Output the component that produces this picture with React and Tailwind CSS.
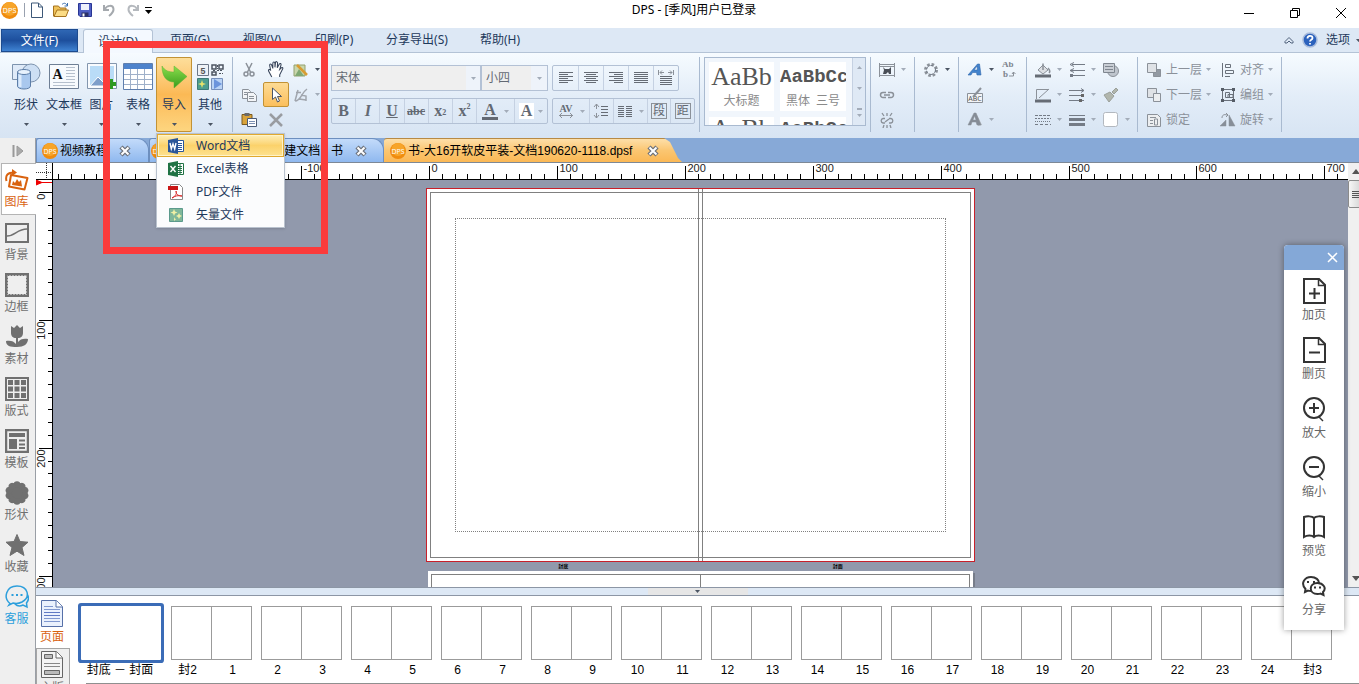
import clsx from 'clsx'

const SCALE = 1.279

const SIDEBAR = ['图库', '背景', '边框', '素材', '版式', '模板', '形状', '收藏', '客服']

const THUMBS = [
  ['封2', '1'], ['2', '3'], ['4', '5'], ['6', '7'], ['8', '9'], ['10', '11'], ['12', '13'],
  ['14', '15'], ['16', '17'], ['18', '19'], ['20', '21'], ['22', '23'], ['24', '封3'],
]

function range(from, to) {
  return Array.from({ length: to - from + 1 }, (_, i) => from + i)
}

function Svg({ s = 16, box = 16, className, children }) {
  return (
    <svg width={s} height={s} viewBox={`0 0 ${box} ${box}`} fill="none" stroke="#8b9199" className={clsx('shrink-0', className)} aria-hidden="true">
      {children}
    </svg>
  )
}

function Arrow({ dark, className }) {
  return (
    <svg width="5" height="3" viewBox="0 0 5 3" className={clsx('shrink-0', className)} aria-hidden="true">
      <path d="M0 0h5L2.5 3z" fill={dark ? '#4b5563' : '#a3acb9'} />
    </svg>
  )
}

function DpsLogo({ s = 16 }) {
  return (
    <svg width={s} height={s} viewBox="0 0 16 16" className="shrink-0" aria-hidden="true">
      <circle cx="8" cy="8" r="8" fill="#f08c0e" />
      <circle cx="8" cy="6.500" r="6.500" fill="#f7a52a" />
      <text x="8" y="10.500" textAnchor="middle" fontSize="7" fill="#fff" fontFamily="Open Sans, sans-serif">DPS</text>
    </svg>
  )
}

/* ---------- title bar ---------- */

function QuickIcons() {
  return (
    <>
      <button aria-label="新建">
        <Svg><path d="M2.500 1h7l4 4v10.500h-11z" fill="#fff" stroke="#3d5878" /><path d="M9.500 1v4h4" stroke="#3d5878" /></Svg>
      </button>
      <button aria-label="打开">
        <Svg>
          <path d="M.5 14V4h5l1.500 2h6v8z" fill="#f0c258" stroke="#a5731f" />
          <path d="M1 14.500 4 8h11.500L13 14.500z" fill="#fbdc85" stroke="#a5731f" />
          <path d="M9 2.500c2-2 4-1.500 5 1M14.500 1v3h-3" stroke="#3b6fae" />
        </Svg>
      </button>
      <button aria-label="保存">
        <Svg>
          <path d="M1.500 1.500h13v13H3L1.500 13z" fill="#4f5fc4" stroke="#283593" />
          <path d="M4 2h8v6H4z" fill="#eef1fb" stroke="none" />
          <path d="M4.500 10.500h7v4h-7z" fill="#2b3166" stroke="none" />
          <path d="M5.500 11.500h2v3h-2z" fill="#fff" stroke="none" />
        </Svg>
      </button>
      <button aria-label="撤销">
        <Svg><path d="M3 3v5h5M3.500 7.500C6 3 12 2.500 12.500 7c.3 3-2 5-4.500 7" stroke="#a5a9ae" strokeWidth="2" /></Svg>
      </button>
      <button aria-label="重做">
        <Svg><path d="M13 3v5H8M12.500 7.500C10 3 4 2.500 3.500 7c-.3 3 2 5 4.500 7" stroke="#b5b9be" strokeWidth="2" /></Svg>
      </button>
    </>
  )
}

function TitleBar() {
  return (
    <header className="flex h-7 shrink-0 bg-white">
      <div className="flex h-5 flex-1 items-center pl-px">
        <DpsLogo s={17} />
        <span className="ml-1.5 h-3.5 w-px bg-gray-400" />
        <div className="ml-1 flex items-center gap-2 [&>button]:h-4"><QuickIcons /></div>
        <button className="ml-1 flex flex-col items-center gap-0.5" aria-label="自定义快速访问">
          <span className="h-px w-[7px] bg-black" />
          <svg width="7" height="4" viewBox="0 0 7 4"><path d="M0 0h7L3.500 4z" fill="#000" /></svg>
        </button>
      </div>
      <h1 className="ml-10 h-5 leading-5 text-black">DPS - [季风]用户已登录</h1>
      <div className="flex h-[26px] flex-1 items-center justify-end pr-3 gap-[34px]">
        <button aria-label="最小化"><Svg s={12} box={12}><path d="M1 6.500h10" stroke="#000" /></Svg></button>
        <button aria-label="还原"><Svg s={12} box={12}><path d="M1.500 3.500h7v7h-7zM3.500 3.500v-2h7v7h-2" stroke="#000" /></Svg></button>
        <button aria-label="关闭"><Svg s={12} box={12}><path d="m1 1 10 10M11 1 1 11" stroke="#000" /></Svg></button>
      </div>
    </header>
  )
}

function MenuTabs() {
  return (
    <nav className="flex h-[25px] shrink-0 items-end border-b border-[#b4c3d6] bg-[#dde8f5] text-[#1e395b]">
      <button className="ml-px h-[23px] w-[77px] border border-[#1d4b8f] bg-linear-to-b from-[#2f67b4] via-[#1d4f9d] to-[#3f83d3] text-white">文件(F)</button>
      <button className="mr-px -mb-px ml-[5px] h-6 w-[70px] rounded-t-[3px] border border-b-0 border-[#b4c3d6] bg-[#f4f9ff]">设计(D)</button>
      {['页面(G)', '视图(V)', '印刷(P)', '分享导出(S)', '帮助(H)'].map(t => (
        <button key={t} className={clsx('h-6 shrink-0', t.length > 5 ? 'w-[94px]' : 'w-[72px]')}>{t}</button>
      ))}
      <div className="mr-0.5 ml-auto flex h-full items-center gap-2">
        <button aria-label="收起功能区"><Svg s={10} box={10}><path d="M1 6.500 5 2.500l4 4v1.500H7L5 6 3 8H1z" stroke="#51627c" /></Svg></button>
        <button aria-label="帮助">
          <Svg>
            <circle cx="8" cy="8" r="7" fill="#2c62bd" stroke="#a9bcdc" strokeWidth="1.500" />
            <path d="M5.500 6.500c0-3.500 5-3.500 5-.5 0 2-2.500 1.500-2.500 3.500M8 11v1.500" stroke="#fff" strokeWidth="1.800" />
          </Svg>
        </button>
        <button className="flex items-center gap-1.5">选项 <Arrow dark className="-mr-1" /></button>
      </div>
    </nav>
  )
}

/* ---------- ribbon ---------- */

function BigIcon({ name }) {
  if (name === '形状') return (
    <Svg s={30} box={30}>
      <path d="M1.500 3.500h15v15h-15z" fill="#dfeaf8" stroke="#7d93ae" />
      <circle cx="20" cy="12" r="9" fill="#cddff4" stroke="#7d93ae" />
      <path d="M6.500 11v14c0 4 13 4 13 0V11z" fill="#a9c8ee" stroke="#5d7ea8" />
      <path d="M9 13v13" stroke="#dcebfb" strokeWidth="3" />
      <ellipse cx="13" cy="11" rx="6.500" ry="2.500" fill="#e8f2fd" stroke="#5d7ea8" />
    </Svg>
  )
  if (name === '文本框') return (
    <Svg s={30} box={30}>
      <path d="M.5 3.500h29v24H.5z" fill="#f7fafd" stroke="#6e7f95" />
      <text x="8.500" y="18" textAnchor="middle" fontSize="14" fontWeight="bold" fill="#111" stroke="none" fontFamily="Liberation Serif, serif">A</text>
      <path d="M17 6.500h9M17 9.500h9M17 12.500h9M17 15.500h9M17 18.500h9M4 21.500h22M4 24.500h22" stroke="#b6c0cd" />
    </Svg>
  )
  if (name === '图片') return (
    <Svg s={30} box={30}>
      <path d="M.5 2.500h29v25H.5z" fill="#f8fbfe" stroke="#8396ae" />
      <path d="M3 5h24v20H3z" fill="#b9dcf7" stroke="none" />
      <path d="m3 25 8-9 6 6 3-3 7 6z" fill="#7f9fca" stroke="#fff" />
      <path d="M24 18v10M19 23h10" stroke="#2f9a23" strokeWidth="4" />
    </Svg>
  )
  if (name === '表格') return (
    <Svg s={30} box={30}>
      <path d="M.5 2.500h29v26H.5z" fill="#fff" stroke="#5f7fae" />
      <path d="M1 3h28v5H1z" fill="#4d83cc" stroke="none" />
      <path d="M7.500 8v20M14.500 8v20M21.500 8v20M1 13.500h28M1 18.500h28M1 23.500h28" stroke="#9fb0c9" />
    </Svg>
  )
  if (name === '导入') return (
    <Svg s={30} box={30}>
      <defs>
        <linearGradient id="import-green" x1="0" y1="0" x2="0" y2="1">
          <stop offset="0" stopColor="#8ade4c" />
          <stop offset="1" stopColor="#3a9c1c" />
        </linearGradient>
      </defs>
      <path d="M3 5c3 5 7 6 12 6V5l13 10.500L15 27v-6C8 21 3 16 3 5z" fill="url(#import-green)" stroke="#5cb035" strokeWidth=".5" />
    </Svg>
  )
  return (
    <Svg s={30} box={30}>
      <path d="M2.500 3.500h11v11h-11z" fill="#eef2f7" stroke="#6c7788" />
      <text x="8" y="12.500" textAnchor="middle" fontSize="9" fontWeight="bold" fill="#555" stroke="none" fontFamily="Liberation Mono, monospace">5</text>
      <path d="M17 4h4v4h-4zM24 4h4v4h-4zM17 11h4v3h-4z" stroke="#4d5561" strokeWidth="1.500" />
      <path d="M22.500 4v4M22 9.500h6M24 12.500h4M18 9.500h2" stroke="#4d5561" strokeDasharray="2 1" />
      <path d="M2.500 17.500h11v11h-11z" fill="#4c9e8e" stroke="#3e7a78" />
      <path d="m7 19 1 3 3 1-3 1-1 3-1-3-3-1 3-1z" fill="#e6e36b" stroke="none" />
      <path d="M16.500 17.500h11v11h-11z" fill="#b9d3f5" stroke="#7790bb" />
      <path d="m19 18 8 5-8 5z" fill="#6b94dc" stroke="none" />
    </Svg>
  )
}

const BIG = [
  ['形状', 'w-[38px]'], ['文本框', 'w-[38px]'], ['图片', 'w-[37px]'],
  ['表格', 'w-9'], ['导入', 'w-9'], ['其他', 'w-9'],
]

function BigButtons() {
  return (
    <div className="flex pl-[7px] pr-1">
      {BIG.map(([name, width]) => (
        <button
          key={name}
          className={clsx(
            'flex h-[75px] flex-col items-center pt-1 text-[#1e395b]',
            width,
            name === '导入' && 'rounded-[2px] bg-linear-to-b from-[#fddf9c] via-[#fbb955] to-[#fdd680] ring-1 ring-[#c29235] ring-inset',
          )}
        >
          <BigIcon name={name} />
          <span className="mt-1 leading-5 whitespace-nowrap">{name}</span>
          <Arrow dark className="mt-2" />
        </button>
      ))}
    </div>
  )
}

function Group({ className, children }) {
  return <div className={clsx('h-[75px] shrink-0 border-l border-[#a9bad0]', className)}>{children}</div>
}

// Small button with an optional drop-down arrow
function Tool({ label, arrow, dark, className, children }) {
  return (
    <button aria-label={label} className={clsx('flex h-[25px] items-center gap-1.5', className)}>
      {children}
      {arrow && <Arrow dark={dark} />}
    </button>
  )
}

function EditGroup() {
  return (
    <Group className="grid w-[94px] grid-cols-[28px_26px_1fr] pl-[2px]">
      <Tool label="剪切" className="justify-center"><Svg><path d="M5 1l4.500 9M11 1 6.500 10" strokeWidth="1.500" /><circle cx="5" cy="12" r="2" strokeWidth="1.500" /><circle cx="11" cy="12" r="2" strokeWidth="1.500" /></Svg></Tool>
      <Tool label="抓手" className="justify-center">
        <Svg s={18} box={17}><path d="M4.500 15 1.500 9.500C1 8 2.500 7.500 3.500 9L2.500 4c0-1.500 1.500-1.500 2 0L5.500 7V2.500c0-2 2-2 2 0V6l.5-4.500c.3-1.500 2-1 2 .5L9.700 6.500 11.500 3c.8-1.300 2-.5 1.700.8L12 8l1.500-1.500c1-1 2 0 1 1.500L12 13v2" fill="#fff" stroke="#37445a" /></Svg>
      </Tool>
      <Tool label="图像编辑" arrow dark className="pl-1">
        <Svg><path d="M1 3h11v11H1z" fill="#c9d7ac" stroke="#94a06e" /><path d="m2 14 4-7 5 7z" fill="#7fa873" stroke="none" /><path d="m4 3 10 10" stroke="#d99c32" strokeWidth="2.500" /></Svg>
      </Tool>
      <Tool label="复制" className="justify-center"><Svg><path d="M1.500 2.500h6l2 2v7h-8z" fill="#f3f5f8" /><path d="M6.500 5.500h6l3 3v6h-9z" fill="#f3f5f8" /><path d="M3 5.500h3M3 7.500h3M8 9.500h5M8 11.500h5" /></Svg></Tool>
      <Tool label="选择" className="justify-center rounded-[2px] border border-[#c29235] bg-linear-to-b from-[#fddb93] to-[#fbbf5c]">
        <Svg><path d="M4.500 1v11.500l3-2.500 2 5 2-1-2-4.500h4z" fill="#fff" stroke="#4a5568" /></Svg>
      </Tool>
      <Tool label="路径" arrow className="pl-1"><Svg><path d="M3 5.500h5M2 14 5 3M2 14c6 0 6-8 12-12M8 8l5 1v5M6 12l7 1" stroke="#a0a5ad" strokeWidth="1.500" /></Svg></Tool>
      <Tool label="粘贴" className="justify-center">
        <Svg><path d="M1 2.500h10v10H1z" fill="#d9a33a" stroke="#7a5a20" /><path d="M3.500 1h5v3h-5z" fill="#6a6a6a" stroke="none" /><path d="M6.500 6.500h9v8h-9z" fill="#fff" stroke="#4a5a75" /><path d="M8 9.500h6M8 11.500h6" stroke="#7b8fb2" /></Svg>
      </Tool>
      <Tool label="删除" className="justify-center"><Svg><path d="m2 2 12 12M14 2 2 14" stroke="#999ca1" strokeWidth="2.500" /></Svg></Tool>
    </Group>
  )
}

function Lines({ rows }) {
  return (
    <Svg>
      {rows.map(([x, w], i) => <path key={i} d={`M${x} ${2.5 + i * 2}h${w}`} stroke="#666c75" />)}
    </Svg>
  )
}

const BOX = 'flex h-[26px] items-stretch rounded-[2px] border border-[#b3c1d5] [&>button]:flex [&>button]:items-center [&>button]:justify-center [&>button]:border-l [&>button]:border-[#c5d1e2] [&>button:first-child]:border-l-0'

function FontGroup() {
  return (
    <div className="flex w-[373px] shrink-0 flex-col gap-[7px] pt-2 pl-[5px] text-[#636973]">
      <div className="flex gap-1">
        <div className="flex h-[26px] w-[217px] border border-[#b3c1d5] bg-[#eef3fa]">
          <select disabled aria-label="字体" defaultValue="宋体" className="w-[134px] appearance-none bg-[#efefef] pl-1 opacity-100">
            <option>宋体</option>
          </select>
          <span className="flex w-[14px] items-center justify-center"><Arrow /></span>
          <select disabled aria-label="字号" defaultValue="小四" className="flex-1 appearance-none border-l-2 border-[#b3c1d5] bg-[#efefef] pl-1 opacity-100">
            <option>小四</option>
          </select>
          <span className="flex w-[16px] items-center justify-center"><Arrow /></span>
        </div>
        <div className={clsx(BOX, '[&>button]:w-[25px]')}>
          <button aria-label="左对齐"><Lines rows={[[1, 14], [1, 9], [1, 14], [1, 9], [1, 14], [1, 9]]} /></button>
          <button aria-label="居中"><Lines rows={[[1, 14], [3, 10], [1, 14], [3, 10], [1, 14], [3, 10]]} /></button>
          <button aria-label="右对齐"><Lines rows={[[1, 14], [6, 9], [1, 14], [6, 9], [1, 14], [6, 9]]} /></button>
          <button aria-label="两端对齐"><Lines rows={[[1, 14], [1, 14], [1, 14], [1, 14], [1, 14], [1, 14]]} /></button>
          <button aria-label="分散对齐">
            <Svg><path d="M.5 0v5M15.500 0v5M2 2.500h4M10 2.500h4M4 .5 2 2.500l2 2M12 .5l2 2-2 2" /><path d="M2 6.500h12M2 8.500h12M2 10.500h12M2 12.500h12M2 14.500h12" stroke="#666c75" /></Svg>
          </button>
        </div>
      </div>
      <div className="flex gap-1 font-['Liberation_Serif','Noto_Sans_CJK_SC',serif]">
        <div className={clsx(BOX, 'w-[217px] [&>button]:flex-1 text-base font-bold')}>
          <button>B</button>
          <button className="italic">I</button>
          <button className="underline">U</button>
          <button className="text-xs line-through">abc</button>
          <button className="text-base leading-4">x<sub className="text-[8px]">2</sub></button>
          <button className="text-base leading-4">x<sup className="text-[8px]">2</sup></button>
          <button className="min-w-[38px] gap-1.5" aria-label="字体颜色"><span className="border-b-3 px-0.5 leading-[14px]">A</span><Arrow /></button>
          <button className="min-w-[33px] gap-1" aria-label="背景颜色"><span className="bg-white px-0.5 leading-4">A</span><Arrow /></button>
        </div>
        <div className={clsx(BOX, 'w-[143px] [&>button]:flex-1')}>
          <button className="min-w-9 gap-1.5" aria-label="字间距">
            <Svg><text x="8" y="8.500" textAnchor="middle" fontSize="10" fontWeight="bold" fill="#666c75" stroke="none">AV</text><path d="M1 12.500h14M4 10l-2.500 2.500L4 15M12 10l2.500 2.500L12 15" /></Svg>
            <Arrow />
          </button>
          <button aria-label="行距"><Svg><path d="M3.500 1v5M1 4l2.500-3L6 4M3.500 10v5M1 12l2.500 3L6 12" /><path d="M8 3.500h7M8 6.500h7M8 9.500h7M8 12.500h7" stroke="#666c75" /></Svg></button>
          <button className="min-w-[34px] gap-1.5" aria-label="分栏"><Svg><path d="M1 3.500h6M9 3.500h6M1 5.500h6M9 5.500h6M1 7.500h6M9 7.500h6M1 9.500h6M9 9.500h6M1 11.500h6M9 11.500h6M1 13.500h6M9 13.500h6" stroke="#666c75" /></Svg><Arrow /></button>
          <button><span className="border border-[#8b9199] px-px leading-[14px]">段</span></button>
          <button><span className="border border-[#8b9199] px-px leading-[14px]">距</span></button>
        </div>
      </div>
    </div>
  )
}

const SERIF = "font-['Liberation_Serif',serif] text-[26px] text-[#555]"
const MONO = "font-['Liberation_Mono',monospace] text-[19px] font-bold text-[#555]"

function StyleGallery() {
  return (
    <Group className="w-[171px] pl-1">
      <div className="flex h-[69px] w-[162px] overflow-hidden border border-[#a9bad0] bg-[#f1f6fc]">
        <div className="grid flex-1 grid-cols-[65px_66px] content-start gap-x-1.5 gap-y-1.5 overflow-hidden pt-1 pl-1 text-center whitespace-nowrap text-[#8a8a8a]">
          <button className="h-[49px] bg-white">
            <span className={clsx(SERIF, 'block leading-7')}>AaBb</span>
            <span className="block leading-5">大标题</span>
          </button>
          <button className="h-[49px] overflow-hidden bg-white">
            <span className={clsx(MONO, 'block text-left leading-7')}>AaBbCc</span>
            <span className="block leading-5">黑体&nbsp; 三号</span>
          </button>
          <button className={clsx(SERIF, 'flex h-8 justify-center bg-white leading-6')}>AaBb</button>
          <button className={clsx(MONO, 'flex h-8 overflow-hidden bg-white leading-6')}>AaBbCc</button>
        </div>
        <div className="flex w-[13px] flex-col items-center justify-between border-l border-[#c5d1e2] bg-[#dfe9f5] py-2">
          <Arrow className="rotate-180" />
          <Arrow />
          <span className="border-t-2 border-[#a3acb9] pt-1"><Arrow /></span>
        </div>
      </div>
    </Group>
  )
}

function ShapeGroups() {
  return (
    <>
      <Group className="w-11 pl-2">
        <Tool label="文字环绕" arrow><Svg><path d="M.5 2.500h15M.5 4.500h15M.5 13.500h15M.5 1v14M15.500 1v14" /><path d="m4 5 2 2h4l2-2v7h-2l-1-2-2 2H4l1-4z" fill="#4a4f57" stroke="none" /></Svg></Tool>
        <Tool label="链接"><Svg><path d="M7 5.500H4a2.500 2.500 0 0 0 0 5h3M9 5.500h3a2.500 2.500 0 0 1 0 5H9M5 8h6" strokeWidth="1.500" /></Svg></Tool>
        <Tool label="取消链接"><Svg><path d="M6 6.500H4a2.300 2.300 0 0 0 0 4.500h2M10 6.500h2a2.300 2.300 0 0 1 0 4.500h-2M6 10l4-3M8 1v3M3 1l2 3M13 1l-2 3M8 13v3M4 16l1-3M12 16l-1-3" strokeWidth="1.300" /></Svg></Tool>
      </Group>
      <Group className="w-11 pl-2">
        <Tool label="效果" arrow dark><Svg><circle cx="8" cy="8" r="5.500" strokeWidth="3" strokeDasharray="2.500 1.800" /><circle cx="8" cy="8" r="4.500" stroke="#707885" strokeDasharray="3 2" /></Svg></Tool>
      </Group>
      <Group className="grid w-[68px] grid-cols-[34px_1fr] pl-2">
        <Tool label="艺术字" arrow dark><Svg><path d="M1 13h3l1.500-2.500h4L10 13h4L12.500 2h-2zM7 8l3-4 .5 4z" fill="#4283cd" stroke="#3168ad" strokeWidth=".6" /></Svg></Tool>
        <Tool label="替换"><Svg><g fill="#7c838d" stroke="none" fontSize="9" fontWeight="bold" fontFamily="Liberation Serif, serif"><text x="1" y="5">Ab</text><text x="2" y="15">b</text></g><path d="M8 14h4.500v-4M11 12l1.500-2 2 2" /></Svg></Tool>
        <Tool label="文字编辑"><Svg><path d="M.5 6.500h15v9H.5z" fill="#f2f4f7" /><text x="8" y="14" textAnchor="middle" fontSize="7" fill="#555" stroke="none">ABC</text><path d="m6 10 8-9" strokeWidth="2" /></Svg></Tool>
        <span />
        <Tool label="文字阴影" arrow><Svg><path d="m9 1 6 12-4 1z" fill="#b4b9c0" stroke="none" /><path d="M1 13h3l1-3h4l1 3h4L9 1H7zM6 8l1.500-4L9 8z" fill="#858c96" strokeWidth=".5" /></Svg></Tool>
      </Group>
      <Group className="grid w-[111px] grid-cols-[34px_34px_1fr] pl-2">
        <Tool label="填充" arrow><Svg><path d="m3 8 5-5 5 5-5 4z" fill="#dcdfe3" /><path d="M8 8V1.500M13 6c2 2 2 4 1 5" strokeWidth="1.500" /><path d="M0 14h16" stroke="#666c75" strokeWidth="3" /></Svg></Tool>
        <Tool label="箭头起点" arrow><Svg><path d="M3 2.500h13M1 8.500h15M3 13.500h13M5 .5l-4 2 4 2M5 6.500l-4 2 4 2" stroke="#747b86" /><path d="M1 12h3v3H1z" fill="#747b86" stroke="none" /></Svg></Tool>
        <Tool label="阴影"><Svg><circle cx="10" cy="9" r="5.500" fill="#bfc5cd" /><path d="M.5 1.500h11v9H.5z" fill="#c8cdd4" stroke="#7f868f" /><path d="M2 4.500h8M2 7.500h8" stroke="#7f868f" /></Svg></Tool>
        <Tool label="轮廓" arrow><Svg><path d="M1.500 12V2.500H13M4 11l10-9" /><path d="M0 14h16" stroke="#666c75" strokeWidth="3" /></Svg></Tool>
        <Tool label="箭头终点" arrow><Svg><path d="M0 3.500h15M0 8.500h15M0 13.500h15M12 1.500l3 2-3 2" stroke="#747b86" /><path d="M12 7h3v3h-3zM10 12h3v3h-3z" fill="#666" stroke="none" /></Svg></Tool>
        <Tool label="格式刷"><Svg><path d="m9 5 4-4 2 2-4 4zM1 8l6-3 4 4-5 6z" fill="#b1b6ad" stroke="#9ba09a" /></Svg></Tool>
        <Tool label="线型" arrow><Svg><g stroke="#747b86"><path d="M0 3.500h16" strokeDasharray="3 1" /><path d="M0 6.500h16" strokeDasharray="2 1" /><path d="M0 9.500h16" strokeDasharray="1 1" /><path d="M0 12.500h16" strokeDasharray="3 2" /></g></Svg></Tool>
        <Tool label="线宽" arrow><Svg><path d="M0 3.500h16" stroke="#747b86" /><path d="M0 7.500h16" stroke="#747b86" strokeWidth="3" /><path d="M0 12.500h16" stroke="#747b86" strokeWidth="3" /></Svg></Tool>
        <Tool label="圆角" arrow><Svg><rect x=".5" y=".5" width="14" height="14" rx="2" fill="#fff" stroke="#b3b8bf" /></Svg></Tool>
      </Group>
    </>
  )
}

function ArrangeGroup() {
  return (
    <Group className="grid w-[145px] grid-cols-[74px_1fr] border-r pl-2 whitespace-nowrap text-[#8b919a] [&_button]:gap-1">
      <Tool arrow><Svg><path d="M7.500 7.500h7v7h-7z" fill="#9299a2" /><path d="M1.500 1.500h9v9h-9z" fill="#dfe2e6" /></Svg>上一层</Tool>
      <Tool arrow><Svg><path d="M2.500 1v14M5.500 2.500h5v3h-5zM5.500 8.500h8v3h-8zM5 14.500h5" stroke="#6a717b" /></Svg>对齐</Tool>
      <Tool arrow><Svg><path d="M1.500 1.500h9v9h-9z" fill="#dfe2e6" /><path d="M7.500 6.500h7v8h-7z" fill="#eceef0" /></Svg>下一层</Tool>
      <Tool arrow><Svg><path d="M2.500 2.500h11v11h-11zM5.500 5.500h4v5h-4zM8 7.500h5v3H8z" stroke="#6a717b" /><path d="M1 1h3v3H1zM12 1h3v3h-3zM1 12h3v3H1zM12 12h3v3h-3z" fill="#555c66" stroke="none" /></Svg>编组</Tool>
      <Tool><Svg><path d="M1.500 2.500h10l3 3v9h-13z" fill="#eceef0" /><path d="M4 5.500h6M4 8.500h3M4 11.500h3M8.500 7v6h3V7z" /></Svg>锁定</Tool>
      <Tool arrow><Svg><path d="m0 14 6-6v6zM9 14V3l6 11z" fill="#878e98" strokeWidth=".5" /><path d="M2 6c0-3 2-4 5-3M6 1l2 2-2 2" /></Svg>旋转</Tool>
    </Group>
  )
}

const IMPORTS = ['Word文档', 'Excel表格', 'PDF文件', '矢量文件']

function ImportIcon({ name }) {
  if (name === 'PDF文件') return (
    <Svg>
      <path d="M2.500.5h9l3 3v12h-12z" fill="#fff" stroke="#8a8a8a" />
      <path d="M0 2h10v4H0z" fill="#c91616" stroke="none" />
      <path d="M4 14c4-2 5-5 4-7 0 4 3 5 6 5-4-1-7 0-10 2z" stroke="#d92b2b" />
    </Svg>
  )
  if (name === '矢量文件') return (
    <Svg>
      <path d="M1.500 1.500h13v13h-13z" fill="#7fb79a" stroke="#5b9a8c" />
      <path d="m6 2 1 2.500 2.500 1L7 6.500 6 9 5 6.500l-2.500-1L5 4.500zM11 6l1 2 2 1-2 1-1 2-1-2-2-1 2-1zM6 10l.8 1.500 1.500.8-1.500.8L6 14.500z" fill="#f0f0a5" stroke="none" />
    </Svg>
  )
  const word = name === 'Word文档'
  const color = word ? '#2a5699' : '#1f7244'
  return (
    <Svg>
      <path d="M8.500 2.500h7v11h-7z" fill="#fff" stroke={color} />
      <path d="M10 5.500h4M10 7.500h4M10 9.500h4M10 11.500h4" stroke={color} />
      {!word && <path d="M12 3v10" stroke={color} />}
      <path d="M0 2 10 0v16L0 14z" fill={color} stroke="none" />
      <path d={word ? 'm2 5 1.300 6L5 6l1.700 5L8 5' : 'm2.500 5 5 6M7.500 5l-5 6'} stroke="#fff" strokeWidth="1.400" />
    </Svg>
  )
}

function ImportMenu() {
  return (
    <ul className="absolute top-[80px] left-[156px] z-20 w-[129px] border border-[#b9c2ce] bg-[#fbfcfd] pb-px text-[#1e395b] shadow-sm">
      {IMPORTS.map((name, i) => (
        <li key={name}>
          <button className={clsx(
            'flex h-[23px] w-full items-center gap-3 border pl-2.5',
            i === 0 ? 'border-[#e0a92f] bg-linear-to-b from-[#fdeeb6] via-[#fbd26b] to-[#fde28f] ring-1 ring-[#fff3c8] ring-inset' : 'border-transparent',
          )}>
            <ImportIcon name={name} />
            <span>{name}</span>
          </button>
        </li>
      ))}
    </ul>
  )
}

function Ribbon() {
  return (
    <div className="relative flex h-[85px] shrink-0 bg-linear-to-b from-[#f6fbff] via-[#e3edf8] to-[#d7e4f3] pt-1">
      <BigButtons />
      <EditGroup />
      <FontGroup />
      <StyleGallery />
      <ShapeGroups />
      <ArrangeGroup />
      <ImportMenu />
    </div>
  )
}

/* ---------- workspace ---------- */

function SideIcon({ name }) {
  const g = '#707070'
  switch (name) {
    case '图库': return <Svg s={24} box={24}><path d="m6 7 16.500 3-3 11.500L4 18.500z" stroke="#d9620f" strokeWidth="2" strokeLinejoin="round" /><path d="m7 17 1-4 2 2 2-4 2 3 2-2 1 6.500z" fill="#d9620f" stroke="none" /><path d="M1.500 13C0 7 3 4.500 9 4.500" stroke="#d9620f" strokeWidth="2" /><path d="m7 1 5 3.500L7 8z" fill="#d9620f" stroke="none" /></Svg>
    case '背景': return <Svg s={24} box={24}><path d="M1 3h22v18H1z" stroke={g} strokeWidth="2" /><path d="M2 15c8 0 10-7 20-7" stroke={g} strokeWidth="1.500" /></Svg>
    case '边框': return <Svg s={24} box={24}><path d="M1 1h22v22H1z" stroke={g} strokeWidth="2" /><path d="M2.500 2.500h19v19h-19z" stroke={g} strokeDasharray="2 1" /></Svg>
    case '素材': return <Svg s={24} box={24}><path d="M6 1l3 2 3-3 3 3 3-2v7c0 3-2 5-5 5v4c2-3 6-4 10-3 0 5-4 8-11 8S1 21 1 16c4-1 8 0 10 3v-6c-3 0-5-2-5-5z" fill={g} stroke="none" /></Svg>
    case '版式': return <Svg s={24} box={24}><path d="M1 1h22v22H1z" fill="#efefef" stroke={g} strokeWidth="2" /><path d="M3 3h5v5H3zM9.500 3h5v5h-5zM16 3h5v5h-5zM3 9.500h5v5H3zM9.500 9.500h5v5h-5zM16 9.500h5v5h-5zM3 16h5v5H3zM9.500 16h5v5h-5zM16 16h5v5h-5z" fill={g} stroke="none" /></Svg>
    case '模板': return <Svg s={24} box={24}><path d="M1 1h22v22H1z" fill="#efefef" stroke={g} strokeWidth="2.500" /><path d="M4 4h16v4H4zM4 10h8v10H4z" fill={g} stroke="none" /><path d="M14 11.500h6M14 15.500h6M14 19h6" stroke={g} strokeWidth="2" /></Svg>
    case '形状': return (
      <Svg s={24} box={24}>
        <g fill={g} stroke="none">
          <circle cx="12" cy="12" r="10.500" />
          {range(0, 9).map(i => <circle key={i} cx="12" cy="3.500" r="3.300" transform={`rotate(${i * 36} 12 12)`} />)}
        </g>
      </Svg>
    )
    case '收藏': return <Svg s={24} box={24}><path d="m12 1.500 3 7 8 .7-6 5.300 2 8-7-4.300L5 22.500l2-8L1 9.200l8-.7z" fill={g} stroke={g} strokeLinejoin="round" /></Svg>
    default: return <Svg s={24} box={24}><path d="M5 18.500C-2 13 1 1 12 1s14 11 5 16c-3 1.500-6 2-9 1l-4 2zM22 9c2 3 2 6-.5 9l.5 4-4-2c-3 1.500-6 1-8-1" stroke="#2d9fdc" strokeWidth="1.500" /><path d="M6.500 10h2M11 10h2M15.500 10h2" stroke="#2d9fdc" strokeWidth="2" /></Svg>
  }
}

function Sidebar() {
  return (
    <aside className="flex w-9 shrink-0 flex-col border-r border-[#9a9fa6] bg-[#efefef]">
      <button className="flex h-[25px] items-center justify-center" aria-label="展开">
        <Svg><path d="M3.500 2v12" stroke="#999" strokeWidth="2" /><path d="m7 3 6 5-6 5z" fill="#aaa" stroke="#999" /></Svg>
      </button>
      {SIDEBAR.map(name => (
        <button
          key={name}
          className={clsx(
            'flex h-[52px] shrink-0 flex-col items-center',
            name === '图库' ? '-mr-px ml-px border border-r-0 border-[#b4b4b4] bg-white pt-1 pr-[5px] text-[#d9620f]' : 'pt-1.5 pr-0.5',
            name === '客服' && 'text-[#2d9fdc]',
            name !== '图库' && name !== '客服' && 'text-[#707070]',
          )}
        >
          <SideIcon name={name} />
          <span className="leading-5">{name}</span>
        </button>
      ))}
    </aside>
  )
}

function CloseX() {
  return (
    <button aria-label="关闭文档" className="flex">
      <Svg s={12} box={12}><path d="m2 2 8 8M10 2l-8 8" stroke="#6b7079" strokeWidth="4.500" /><path d="m2.500 2.500 7 7M9.500 2.500l-7 7" stroke="#fff" strokeWidth="2" /></Svg>
    </button>
  )
}

const TAB_BLUE = 'flex h-6 items-center rounded-tr-[12px] rounded-tl-[3px] border border-b-0 border-[#6d8fbf] bg-linear-to-b from-[#c3dbfa] to-[#8fb8ef]'

function DocTabs() {
  return (
    <div className="flex h-[25px] shrink-0 items-end border-b border-[#7d8896] bg-[#87a9d7] font-['Liberation_Sans','Noto_Sans_CJK_SC',sans-serif] whitespace-nowrap text-black">
      <div className={clsx(TAB_BLUE, 'w-[113px] gap-0.5 pl-[5px]')}><DpsLogo /><span className="flex-1">视频教程</span><span className="pr-[17px]"><CloseX /></span></div>
      <div className={clsx(TAB_BLUE, 'w-[235px] justify-end gap-3 pr-[16px]')}><span className="flex flex-1 pl-px"><DpsLogo /></span><span>新建文档 - 书</span><CloseX /></div>
      <div className="flex h-6 w-[298px] items-center gap-0.5 rounded-tl-[3px] border-t border-[#b78a45] bg-linear-to-b from-[#fddfa8] via-[#fbc671] to-[#fbb855] pl-1.5 [clip-path:polygon(0_0,calc(100%-18px)_0,calc(100%-12px)_4px,calc(100%-4px)_20px,100%_100%,0_100%)]">
        <DpsLogo />
        <span className="flex-1">书-大16开软皮平装-文档190620-1118.dpsf</span>
        <span className="pr-[23px]"><CloseX /></span>
      </div>
    </div>
  )
}

function TopRuler() {
  return (
    <svg className="h-[17px] min-w-0 flex-1 border-b border-black bg-white" aria-hidden="true">
      {range(-29, 90).map(n => {
        const x = Math.round(376 + n * 10 * SCALE) + 0.5
        const major = n % 10 === 0
        return (
          <g key={n}>
            <path d={`M${x} ${major ? 3 : 11}V17`} stroke="#000" />
            {major && <text x={x + 2} y="9" fontSize="11" fill="#222">{n * 10}</text>}
          </g>
        )
      })}
    </svg>
  )
}

function SideRuler() {
  return (
    <svg className="w-[17px] shrink-0 border-r border-black bg-white" aria-hidden="true">
      {range(0, 60).map(n => {
        const y = Math.round(12 + n * 10 * SCALE) + 0.5
        const major = n % 10 === 0
        return (
          <g key={n}>
            <path d={`M${major ? 3 : 12} ${y}H17`} stroke="#000" />
            {major && <text transform={`translate(9 ${y + 1}) rotate(-90)`} textAnchor="end" fontSize="11" fill="#222">{n * 10}</text>}
          </g>
        )
      })}
      <path d="M0 0v5l6-2.500zM6 2.500h11" fill="#e00" stroke="#e00" />
    </svg>
  )
}

function Canvas() {
  return (
    <main className="flex min-w-0 flex-1 flex-col items-center overflow-hidden bg-[#9199ac] pt-2">
      <div className="relative h-[374px] w-[549px] shrink-0 border border-[#c8202a] bg-white p-[3px]">
        <div className="h-full border border-[#808080] px-6 py-[25px]">
          <div className="h-full border border-dotted border-[#808080]" />
        </div>
        <span className="absolute inset-y-0 left-[271px] w-[5px] border-x border-[#808080]" />
      </div>
      <div className="flex w-[549px] shrink-0 justify-around text-[5px] leading-[9px] font-bold text-black"><span>封底</span><span>封面</span></div>
      <div className="h-[374px] w-[545px] shrink-0 bg-white p-[3px] shadow-[2px_2px_0_#777d8a]">
        <div className="grid h-full grid-cols-2 border border-[#808080]"><span className="border-r border-[#808080]" /></div>
      </div>
    </main>
  )
}

function ScrollBar() {
  return (
    <div className="flex w-[11px] shrink-0 flex-col overflow-hidden bg-[#f0f0f0]">
      <button className="flex h-[17px] w-4 items-center justify-center" aria-label="向上滚动"><svg width="8" height="5"><path d="M0 5h8L4 0z" fill="#555" /></svg></button>
      <span className="flex h-7 w-4 flex-col items-center justify-center gap-px rounded-[2px] border border-[#8b8b8b] bg-linear-to-r from-[#f6f6f6] to-[#d0d0d0]">
        {[0, 1, 2, 3].map(i => <span key={i} className="h-px w-2 bg-[#555]" />)}
      </span>
      <button className="mt-auto flex h-[17px] w-4 items-center justify-center" aria-label="向下滚动"><svg width="8" height="5"><path d="M0 0h8L4 5z" fill="#555" /></svg></button>
    </div>
  )
}

function PageIcon({ gray }) {
  const c = gray ? '#666' : '#5670a8'
  return (
    <svg width="22" height="27" viewBox="0 0 22 27" fill="none" className="shrink-0" aria-hidden="true">
      <path d="M.5.5h15l6 6v20H.5z" fill={gray ? '#f4f4f4' : '#eaf1fd'} stroke={c} />
      <path d="M15 .5v6.500h6.500" fill="#fff" stroke={c} />
      {gray ? <path d="M3.500 3.500h8v4h-8zM3.500 19.500h15v4h-15z" fill="#bbb" stroke={c} /> : <path d="M3 6.500h9M3 9.500h16M3 18.500h16M3 21.500h16" stroke="#8098d0" />}
      <path d="M3 12.500h16M3 15.500h16" stroke={gray ? '#888' : '#5f79c4'} />
    </svg>
  )
}

function PagesPanel() {
  return (
    <section className="flex h-[88px] shrink-0 overflow-hidden bg-white">
      <div className="flex w-[34px] shrink-0 flex-col text-center">
        <button className="flex h-[52px] shrink-0 flex-col items-center pt-1 pr-0.5 text-[#d9620f]"><PageIcon /><span className="leading-5">页面</span></button>
        <button className="flex h-[52px] shrink-0 flex-col items-center border border-[#a5a5a5] bg-[#efefef] pt-[2px] pr-0.5 text-[#707070]"><PageIcon gray /><span className="leading-5">主版</span></button>
      </div>
      <div className="flex min-w-0 flex-1 flex-col justify-between">
        <div className="flex overflow-hidden pt-[10px] pl-[5px] font-['Liberation_Sans','Noto_Sans_CJK_SC',sans-serif] text-black">
          <button className="w-[90px] shrink-0">
            <span className="ml-[6px] block h-[54px] w-[80px] rounded-[1px] ring-3 ring-[#3b6cb7]" />
            <span className="block leading-5">封底 － 封面</span>
          </button>
          {THUMBS.map(([left, right]) => (
            <button key={left} className="w-[90px] shrink-0">
              <span className="ml-[6px] grid h-[54px] w-[81px] grid-cols-2 border border-[#9b9b9b]"><span className="border-r border-[#9b9b9b]" /></span>
              <span className="grid grid-cols-2 leading-5"><span>{left}</span><span>{right}</span></span>
            </button>
          ))}
        </div>
        <span className="ml-4 h-px bg-[#8f8f8f]" />
      </div>
    </section>
  )
}

function FloatIcon({ name }) {
  const k = { stroke: '#333', strokeWidth: 2 }
  if (name === '加页' || name === '删页') return (
    <Svg s={26} box={26}><path d="M3 1h15l6 6v18H3z" {...k} /><path d="M17.500 1v6.500H24" {...k} strokeWidth="1.500" /><path d={name === '加页' ? 'M8 15.500h11M13.500 10v11' : 'M8 15.500h11'} {...k} /></Svg>
  )
  if (name === '放大' || name === '缩小') return (
    <Svg s={26} box={26}><circle cx="13" cy="12" r="10" {...k} /><path d={name === '放大' ? 'M8 12h10M13 7v10' : 'M8 12h10'} {...k} /><path d="m18 21 4 4" {...k} strokeWidth="1.500" /></Svg>
  )
  if (name === '预览') return (
    <Svg s={26} box={26}><path d="M13 4c-2-2-7-2-10-1v20c3-2 8-2 10 0 2-2 7-2 10 0V3c-3-1-8-1-10 1zv19" {...k} /></Svg>
  )
  return (
    <Svg s={26} box={26}><path d="M10 18c-1 0-2 0-3-.4L4 19l.5-3C-1 10 4 4 10 4c5 0 8 3 8 6" {...k} /><path d="M16.500 10c-9 0-9 11 0 11 1 0 2 0 3-.4l3 1.400-.5-3c4-4 0-9-5.500-9z" fill="#fff" {...k} /><path d="M6 9h2M12 9h2M13 14.500h2M18 14.500h2" {...k} /></Svg>
  )
}

function FloatPanel() {
  return (
    <div className="absolute top-[245px] right-[15px] z-10 w-[60px] rounded-t-[4px] bg-white pb-2 shadow-[0_0_6px_rgba(0,0,0,0.4)]">
      <div className="mb-2 flex h-[25px] items-center justify-end rounded-t-[4px] bg-[#84a8d7] pr-1.5">
        <button aria-label="关闭面板"><Svg s={11} box={11}><path d="m1 1 9 9M10 1 1 10" stroke="#fff" strokeWidth="1.500" /></Svg></button>
      </div>
      {['加页', '删页', '放大', '缩小', '预览', '分享'].map(name => (
        <button key={name} className="flex h-[59px] w-full flex-col items-center gap-px text-[#666] last:h-[49px]">
          <FloatIcon name={name} />
          <span className="leading-5">{name}</span>
        </button>
      ))}
    </div>
  )
}

export default function App() {
  return (
    <div className="relative flex h-screen flex-col overflow-hidden bg-white font-['Noto_Sans','Noto_Sans_CJK_SC',sans-serif] text-xs">
      <TitleBar />
      <MenuTabs />
      <Ribbon />
      <div className="flex min-h-0 flex-1">
        <Sidebar />
        <div className="flex min-w-0 flex-1 flex-col">
          <DocTabs />
          <div className="flex min-h-0 flex-1">
            <div className="flex min-w-0 flex-1 flex-col font-['Liberation_Sans','Noto_Sans_CJK_SC',sans-serif]">
              <div className="flex">
                <svg className="h-[17px] w-[17px] border-r border-b border-black bg-white" aria-hidden="true">
                  <path d="M0 9.500h16M10.500 0v16" stroke="#333" strokeDasharray="1 1" />
                </svg>
                <TopRuler />
              </div>
              <div className="flex min-h-0 flex-1"><SideRuler /><Canvas /></div>
            </div>
            <ScrollBar />
          </div>
          <div className="flex h-[9px] shrink-0 items-center justify-center border-y border-[#8c96a5] bg-[#dde8f5]">
            <button className="flex h-full w-[100px] items-center justify-center bg-[#e6e6e6]" aria-label="折叠页面栏"><Arrow dark /></button>
          </div>
          <PagesPanel />
        </div>
      </div>
      <FloatPanel />
      <div className="pointer-events-none absolute top-[41px] left-[103px] z-10 h-[213px] w-[225px] border-7 border-[#fb3b3b]" />
    </div>
  )
}
